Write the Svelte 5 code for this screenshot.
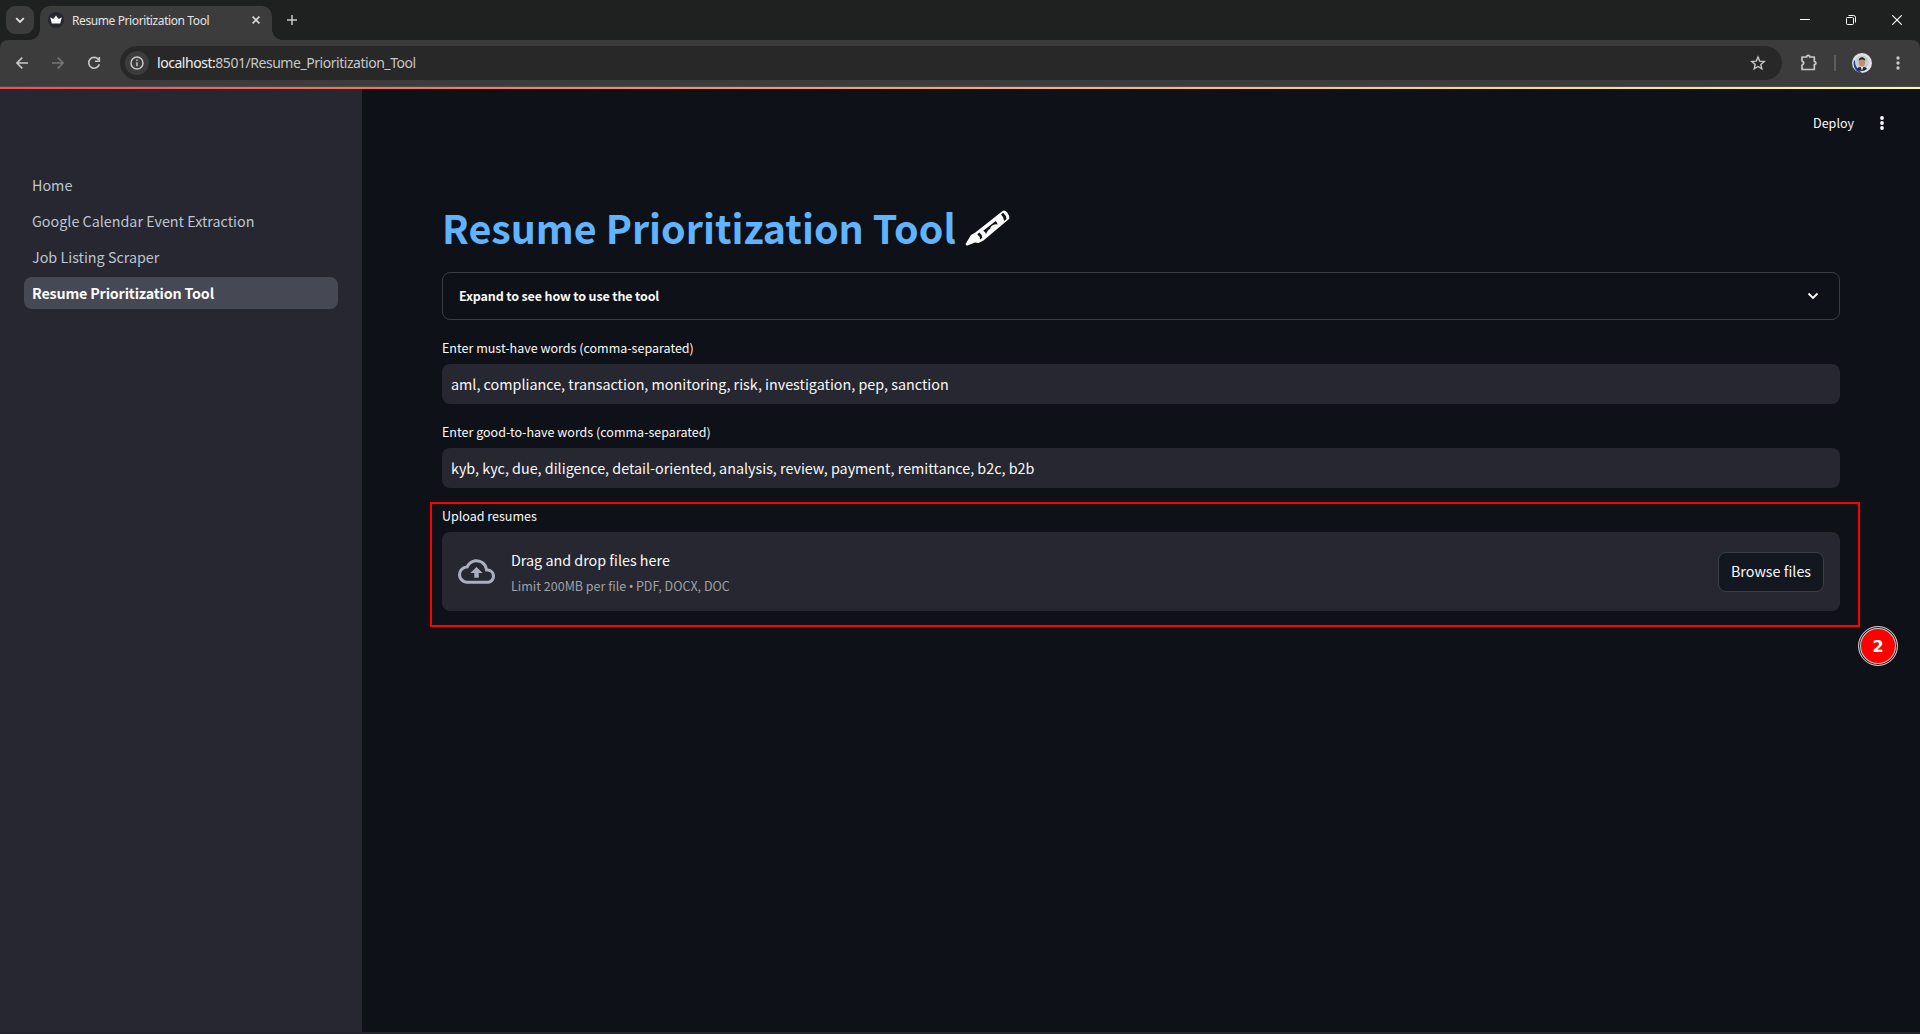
<script>
  const menu = ['Home', 'Google Calendar Event Extraction', 'Job Listing Scraper', 'Resume Prioritization Tool'];
  const activeItem = 'Resume Prioritization Tool';
  const fields = [
    { label: 'Enter must-have words (comma-separated)', value: 'aml, compliance, transaction, monitoring, risk, investigation, pep, sanction' },
    { label: 'Enter good-to-have words (comma-separated)', value: 'kyb, kyc, due, diligence, detail-oriented, analysis, review, payment, remittance, b2c, b2b' }
  ];
</script>

<div class="browser">
  <div class="tabs">
    <div class="tabsearch"><svg width="10" height="7" viewBox="0 0 10 7"><path d="M1.2 1.2 5 5l3.8-3.8" fill="none" stroke="#e3e3e3" stroke-width="1.8" /></svg></div>
    <div class="tab">
      <svg class="crown" width="16" height="16" viewBox="0 0 16 16"><circle cx="8" cy="8" r="8" fill="#262730" /><path d="M2.2 5.2 5.3 7 8 3.6 10.7 7l3.1-1.8-1.6 6.3H3.8z" fill="#fafafa" /></svg>
      <span class="tabtitle">Resume Prioritization Tool</span>
      <svg class="tabclose" width="8" height="8" viewBox="0 0 8 8"><path d="m.6.6 6.8 6.8m0-6.8L.6 7.4" stroke="#e3e3e3" stroke-width="1.5" /></svg>
    </div>
    <svg class="newtab" width="10" height="10" viewBox="0 0 10 10"><path d="M5 0v10M0 5h10" stroke="#c7c7c7" stroke-width="1.5" /></svg>
    <div class="winctl">
      <svg width="10" height="10" viewBox="0 0 10 10"><path d="M0 4.5h10" stroke="#fff" /></svg>
      <svg width="10" height="10" viewBox="0 0 10 10" fill="none" stroke="#fff"><rect x=".5" y="2.5" width="7" height="7" rx="1" /><path d="M2.5.5h5a2 2 0 0 1 2 2v5" /></svg>
      <svg width="10" height="10" viewBox="0 0 10 10"><path d="m.3.3 9.4 9.4m0-9.4L.3 9.7" stroke="#fff" stroke-width="1.1" /></svg>
    </div>
  </div>
  <div class="toolbarwrap">
    <div class="toolbar">
      <div class="navs">
        <svg width="16" height="16" viewBox="0 0 16 16" fill="none" stroke="#c7c7c7" stroke-width="1.6"><path d="M14 8H3M8.300 2.600 2.900 8l5.400 5.400" /></svg>
        <svg width="16" height="16" viewBox="0 0 16 16" fill="none" stroke="#757575" stroke-width="1.6"><path d="M2 8h11M7.700 2.600 13.100 8l-5.400 5.400" /></svg>
        <svg width="16" height="16" viewBox="0 0 16 16" fill="none" stroke="#c7c7c7" stroke-width="1.6"><path d="M12.600 4.800A5.400 5.400 0 1 0 13.300 9.300M13.300 2v4.200H9" /></svg>
      </div>
      <div class="omnibox">
        <div class="info"><svg width="14" height="14" viewBox="0 0 14 14"><circle cx="7" cy="7" r="6" fill="none" stroke="#c7c7c7" stroke-width="1.5" /><path d="M7 6.200v4M7 3.600v1.500" stroke="#c7c7c7" stroke-width="1.5" /></svg></div>
        <span class="url"><span class="host">localhost:</span>8501/Resume_Prioritization_Tool</span>
        <svg class="star" width="16" height="16" viewBox="0 0 16 16"><path d="m8 2 1.700 4.100 4.500.4-3.400 2.900 1 4.400L8 11.500l-3.800 2.300 1-4.400-3.400-2.900 4.500-.4z" fill="none" stroke="#c7c7c7" stroke-width="1.400" /></svg>
      </div>
      <svg class="puzzle" width="18" height="18" viewBox="0 0 18 18"><path d="M2 3h4.700V2.200q1.500-1.600 3 0V3h4.600v4.500h.8q1.500 1.500 0 3h-.8v5H2v-4.300q3.600-2.100 0-4.200z" fill="none" stroke="#c7c7c7" stroke-width="1.700" stroke-linejoin="round" /></svg>
      <span class="sep"></span>
      <svg class="avatar" width="20" height="20" viewBox="0 0 20 20"><circle cx="10" cy="10" r="10" fill="#dfe0ea" /><path d="M2 13c-1-4 0-5 1-6l2 8 5 5C6 20 3 17 2 13z" fill="#2b3390" /><circle cx="10" cy="9.500" r="7" fill="#c9cbc9" /><path d="M5 16c1-3 9-3 10 0a8 8 0 0 1-10 0" fill="#20242e" /><path d="m8.500 13.500 1.500 4 1.500-4z" fill="#fff" /><ellipse cx="10" cy="9.600" rx="3.100" ry="4.100" fill="#b98f7c" /><path d="M6.800 8C6.300 3 13.700 3 13.200 8 12.700 6 7.300 6 6.800 8z" fill="#262020" /></svg>
      <svg class="dots" width="4" height="14" viewBox="0 0 4 14" fill="#c7c7c7"><circle cx="2" cy="2" r="1.700" /><circle cx="2" cy="7" r="1.700" /><circle cx="2" cy="12" r="1.700" /></svg>
    </div>
  </div>
  <div class="decoration"></div>
  <div class="page">
    <aside>
      {#each menu as m}
        <div class="item" class:active={m === activeItem}>{m}</div>
      {/each}
    </aside>
    <main>
      <header><span>Deploy</span><svg width="4" height="14" viewBox="0 0 4 14" fill="#fafafa"><circle cx="2" cy="2" r="1.900" /><circle cx="2" cy="7" r="1.900" /><circle cx="2" cy="12" r="1.900" /></svg></header>
      <h1>
        <span>Resume Prioritization Tool</span>
        <svg width="46" height="40" viewBox="0 0 46 40">
          <path fill="#fafafa" fill-rule="evenodd" d="M.7 36.800 6 28l4-2.300L37.300 4.200Q39.600 2.600 42 5.300q2.600 3.300 2.300 6.400L18.500 33.500 13.500 36 10 35.600 2.500 38.500Q.4 38.900.7 36.800zM36 7.600q3 2.600 3.200 6.300l2.300-1.900q-.4-3.700-3.300-6.200zM12.300 27.200q2.600 1.900 2.800 5.300l2.200-1.700q-.3-3.400-2.900-5.300zM18.300 23.800l12.400-9.900q1.700 1.600 1.900 3.600-3.400-.8-5.700 1.300-1.800 1.500-1.800 3.200-1.800.1-4.100 4.900-.6-1.900-2.700-3.100z" />
        </svg>
      </h1>
      <div class="expander"><span>Expand to see how to use the tool</span><svg width="12" height="8" viewBox="0 0 12 8"><path d="M1.500 1.500 6 6l4.500-4.500" fill="none" stroke="#fafafa" stroke-width="1.900" /></svg></div>
      {#each fields as f}
        <div class="label">{f.label}</div>
        <div class="input">{f.value}</div>
      {/each}
      <div class="upload">
        <div class="label">Upload resumes</div>
        <div class="dropzone">
          <svg class="cloud" width="37" height="37" viewBox="0 0 24 24" fill="#a9aec1"><path d="M19.350 10.040A7.490 7.490 0 0 0 12 4C9.110 4 6.600 5.640 5.350 8.040A5.994 5.994 0 0 0 0 14c0 3.310 2.690 6 6 6h13c2.760 0 5-2.240 5-5 0-2.640-2.050-4.780-4.650-4.960zM19 18H6c-2.210 0-4-1.790-4-4 0-2.050 1.530-3.760 3.560-3.970l1.070-.11.5-.95A5.469 5.469 0 0 1 12 6c2.620 0 4.880 1.860 5.390 4.430l.3 1.500 1.530.11A2.980 2.980 0 0 1 22 15c0 1.650-1.350 3-3 3zM8 13h2.550v3h2.900v-3H16l-4-4z" /></svg>
          <div class="hint">
            <span>Drag and drop files here</span>
            <small>Limit 200MB per file<span class="bullet">•</span>PDF, DOCX, DOC</small>
          </div>
          <button>Browse files</button>
        </div>
        <div class="outline"></div>
        <div class="badge">2</div>
      </div>
    </main>
  </div>
</div>

<style>
  :global(body) { background: #0e1117; }
  * { box-sizing: border-box; }
  svg { display: block; flex: none; }
  .browser { width: 1920px; height: 1034px; display: flex; flex-direction: column; font-family: 'Noto Sans CJK SC', sans-serif; color: #fafafa; font-size: 14.33px; overflow: hidden; white-space: nowrap; border-bottom: 2px solid #24242f; }

  .tabs { height: 40px; flex: none; display: flex; align-items: center; background: #1f2020; padding-left: 6px; }
  .tabsearch { width: 28px; height: 28px; border-radius: 9px; background: #3c3c3c; display: grid; place-items: center; margin-right: 6px; }
  .tab { position: relative; width: 232px; height: 34px; align-self: flex-end; border-radius: 10px 10px 0 0; background: #3c3c3c; display: flex; align-items: center; padding: 0 12px 6px 8px; }
  .tab::before, .tab::after { content: ''; position: absolute; bottom: 0; width: 10px; height: 10px; }
  .tab::before { left: -10px; background: radial-gradient(circle at 0 0, transparent 9.5px, #3c3c3c 10px); }
  .tab::after { right: -10px; background: radial-gradient(circle at 100% 0, transparent 9.5px, #3c3c3c 10px); }
  .tabtitle { font: 12px/16px 'Noto Sans', sans-serif; letter-spacing: -0.4px; color: #e3e3e3; margin-left: 8px; padding-top: 1px; flex: 1; }
  .newtab { margin-left: 15px; }
  .winctl { display: flex; gap: 36px; margin-left: auto; padding-right: 18px; }

  .toolbarwrap { background: #1f2020; height: 47px; flex: none; }
  .toolbar { display: flex; align-items: center; height: 47px; background: #3c3c3c; border-radius: 8px 8px 0 0; border-bottom: 1px solid #4a4a4a; padding: 0 20px 0 14px; }
  .navs { display: flex; gap: 20px; width: 106px; }
  .omnibox { width: 1662px; height: 34px; border-radius: 17px; background: #282828; display: flex; align-items: center; padding: 0 16px 0 5px; }
  .info { width: 24px; height: 24px; border-radius: 50%; background: #3c3c3c; display: grid; place-items: center; }
  .url { font: 14px/20px 'Noto Sans', sans-serif; letter-spacing: -0.46px; color: #c7c7c7; margin-left: 8px; flex: 1; }
  .host { color: #f0f0f0; }
  .puzzle { margin-left: 18px; }
  .sep { width: 2px; height: 16px; background: #5c5c5c; margin-left: 16px; }
  .avatar { margin-left: 16px; }
  .dots { margin-left: auto; }
  .decoration { height: 2px; flex: none; background: linear-gradient(90deg, #ff4b4b, #fffd80); }

  .page { display: flex; flex: 1; min-height: 0; }
  aside { width: 362px; background: #262730; padding: 80px 24px 0; display: flex; flex-direction: column; gap: 4px; }
  .item { height: 32px; line-height: 32px; border-radius: 8px; padding-left: 8px; color: #bfc5d3; }
  .active { background: #464853; font-weight: 700; letter-spacing: -0.19px; color: #fafafa; }

  main { flex: 1; padding: 0 80px; }
  header { display: flex; justify-content: flex-end; align-items: center; gap: 26px; height: 68px; margin-right: -44px; font-size: 12.53px; }
  header span { padding-bottom: 1px; }
  h1 { margin: 48px 0 0; height: 44px; font-size: 39.4px; line-height: 44px; font-weight: 700; color: #60b4ff; display: flex; }
  h1 svg { margin: 2px 0 0 9px; }
  .expander { height: 48px; margin-top: 23px; border: 1px solid #3b3d42; border-radius: 8px; display: flex; align-items: center; justify-content: space-between; padding: 0 20px 0 16px; font-size: 12.53px; font-weight: 700; letter-spacing: -0.15px; }
  .expander span { padding-bottom: 2px; }
  .expander svg { margin-bottom: 1px; }
  .label { font-size: 12.53px; line-height: 24px; height: 28px; margin-top: 16px; }
  .input { height: 40px; line-height: 40px; border-radius: 8px; background: #262730; padding-left: 9px; }
  .upload { position: relative; }
  .dropzone { height: 79px; border-radius: 8px; background: #262730; display: flex; align-items: center; padding: 0 16px; }
  .hint { display: flex; flex-direction: column; flex: 1; margin-left: 16px; line-height: 26px; padding-top: 3px; }
  small { font-size: 12.53px; color: #a0a1a6; }
  .bullet { font-family: 'Noto Sans', sans-serif; margin: 0 2.500px; }
  button { width: 106px; height: 40px; border: 1px solid #3c3e47; border-radius: 8px; background: #131720; color: #fafafa; font: inherit; padding: 0 0 2px; }
  .outline { position: absolute; left: -12px; top: -2px; width: 1430px; height: 125px; border: 2px solid #f00; }
  .badge { position: absolute; left: 1416px; top: 122px; width: 40px; height: 40px; border-radius: 50%; border: 1px solid #ccc; background: #f00; box-shadow: inset 0 0 0 1px #181a20, inset 0 0 0 2px #ccc; font: 700 16px/40px 'DejaVu Sans', sans-serif; color: #fff; text-align: center; }
</style>
